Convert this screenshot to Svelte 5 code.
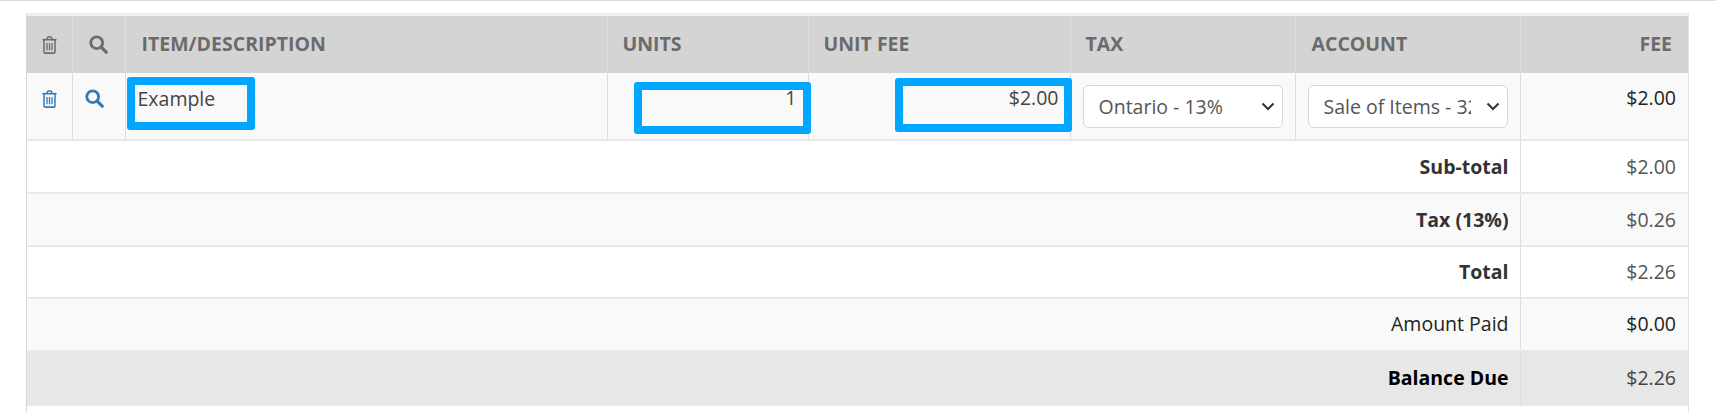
<script lang="ts">
	const summary = [
		{ label: 'Sub-total', value: '$2.00', kind: 'strong' },
		{ label: 'Tax (13%)', value: '$0.26', kind: 'strong alt' },
		{ label: 'Total', value: '$2.26', kind: 'strong short' },
		{ label: 'Amount Paid', value: '$0.00', kind: 'paid alt' },
		{ label: 'Balance Due', value: '$2.26', kind: 'due' },
	];
</script>

{#snippet trash()}
	<svg class="icon" width="15" height="18" viewBox="0 0 15 17" preserveAspectRatio="none" fill="none" stroke="currentColor" aria-hidden="true">
		<path d="M0.5 3.5h14" stroke-width="1.5" />
		<path d="M4.8 3.2 5.6 1.4a1 1 0 0 1 .8-.5h2.2a1 1 0 0 1 .8.5l.8 1.8" stroke-width="1.4" />
		<path d="M2 3.5v11.4c0 .8.5 1.3 1.2 1.3h8.6c.7 0 1.2-.5 1.2-1.3V3.5" stroke-width="1.5" />
		<path d="M5 6.5v7M7.5 6.5v7M10 6.5v7" stroke-width="1.3" />
	</svg>
{/snippet}

{#snippet search()}
	<svg class="icon" width="19" height="19" viewBox="0 0 19 19" fill="none" stroke="currentColor" aria-hidden="true">
		<circle cx="7.7" cy="7.7" r="5.9" stroke-width="2.8" />
		<path d="M12.2 12.2 17.2 17.2" stroke-width="3.2" stroke-linecap="round" />
	</svg>
{/snippet}

<div class="topline"></div>
<div class="page">
	<div class="frame">
		<table>
			<colgroup>
				<col style="width: 45px" />
				<col style="width: 53px" />
				<col style="width: 482px" />
				<col style="width: 201px" />
				<col style="width: 262px" />
				<col style="width: 225px" />
				<col style="width: 225px" />
				<col />
			</colgroup>
			<thead>
				<tr>
					<th class="tool">{@render trash()}</th>
					<th class="tool">{@render search()}</th>
					<th class="item-head">ITEM/DESCRIPTION</th>
					<th>UNITS</th>
					<th>UNIT FEE</th>
					<th>TAX</th>
					<th class="account">ACCOUNT</th>
					<th class="right">FEE</th>
				</tr>
			</thead>
			<tbody>
				<tr class="item">
					<td class="tool blue">{@render trash()}</td>
					<td class="tool blue shift">{@render search()}</td>
					<td class="desc">Example<span class="mark mark-desc"></span></td>
					<td class="num units">1<span class="mark mark-units"></span></td>
					<td class="num unitfee">$2.00<span class="mark mark-fee"></span></td>
					<td class="pick">
						<select>
							<option>Ontario - 13%</option>
						</select>
					</td>
					<td class="pick">
						<select>
							<option>Sale of Items - 3200</option>
						</select>
					</td>
					<td class="num fee">$2.00</td>
				</tr>
				{#each summary as row (row.label)}
					<tr class="sum {row.kind}">
						<td colspan="7" class="label">{row.label}</td>
						<td class="value">{row.value}</td>
					</tr>
				{/each}
			</tbody>
		</table>
	</div>
</div>

<style>
	:global(body) {
		margin: 0;
		background: #fff;
	}

	.topline {
		height: 1px;
		background: #dcdcdc;
	}

	.page {
		height: 411px;
		padding: 12px 27px 0 26px;
		box-sizing: border-box;
		overflow: hidden;
		font-family: 'Open Sans', sans-serif;
		font-size: 19.5px;
		color: #444;
	}

	.frame {
		height: 100%;
		border-left: 1px solid #d8d8d8;
		border-right: 1px solid #e2e2e2;
	}

	table {
		width: 100%;
		table-layout: fixed;
		border-collapse: collapse;
	}

	th {
		height: 53px;
		padding: 0 15px 2px;
		background: #d4d4d4;
		border-top: 3px solid #eeeeee;
		border-right: 1px solid #e0e0e0;
		color: #6b6b6b;
		font-size: 19.5px;
		font-weight: 700;
		text-align: left;
		vertical-align: middle;
	}

	th:last-child {
		border-right: none;
	}

	th.item-head,
	th.account {
		padding-left: 16px;
	}

	th.right {
		text-align: right;
		padding-right: 16px;
	}

	th.tool,
	td.tool {
		padding: 0;
		text-align: center;
	}

	th.tool {
		padding-bottom: 4px;
	}

	.icon {
		display: inline-block;
		vertical-align: middle;
	}

	td {
		padding: 0;
		border-bottom: 2px solid #e8e8e8;
		border-right: 1px solid #dddddd;
		box-sizing: border-box;
	}

	td:last-child {
		border-right: none;
	}

	.item td {
		position: relative;
		height: 67px;
		padding-top: 12px;
		background: #f9f9f9;
		vertical-align: top;
		line-height: 26px;
	}

	.item td.tool {
		padding-top: 11px;
	}

	.item td.tool.shift {
		padding-right: 8px;
	}

	.blue {
		color: #337ab7;
	}

	.item td.desc {
		padding-top: 13px;
		padding-left: 12px;
	}

	.num {
		text-align: right;
	}

	.item td.units {
		padding-right: 11px;
	}

	.item td.unitfee {
		padding-right: 11px;
	}

	.item td.fee {
		padding-right: 12px;
		color: #222;
	}

	.item td.pick {
		padding-top: 12px;
		padding-left: 12px;
		padding-right: 12px;
	}

	select {
		display: block;
		width: 100%;
		height: 43px;
		padding: 0 36px 0 15px;
		border: 1px solid #d5d5d5;
		border-radius: 6px;
		appearance: none;
		background: #fff url("data:image/svg+xml,%3Csvg xmlns='http://www.w3.org/2000/svg' width='14' height='9' viewBox='0 0 14 9'%3E%3Cpath d='M1.5 1.5 7 7l5.5-5.5' fill='none' stroke='%23333' stroke-width='2'/%3E%3C/svg%3E") no-repeat right 7px center;
		color: #555;
		font-family: inherit;
		font-size: 19.5px;
	}

	/* annotation boxes drawn over the editable cells */
	.mark {
		position: absolute;
		z-index: 1;
		box-sizing: border-box;
		border: 8px solid #00a6ff;
		border-radius: 3px;
	}

	.mark-desc {
		left: 1px;
		top: 4px;
		width: 128px;
		height: 53px;
	}

	.mark-units {
		left: 26px;
		top: 9px;
		width: 177px;
		height: 52px;
	}

	.mark-fee {
		left: 86px;
		top: 5px;
		width: 177px;
		height: 54px;
	}

	.sum td {
		height: 53px;
		line-height: 26px;
		vertical-align: middle;
		background: #fff;
	}

	.sum.short td {
		height: 52px;
	}

	.sum.alt td {
		background: #f9f9f9;
	}

	.sum.paid td {
		padding-bottom: 2px;
	}

	.sum.due td {
		height: 54px;
		background: #e7e7e7;
	}

	.label {
		padding-right: 11px;
		text-align: right;
	}

	.value {
		padding-right: 12px;
		text-align: right;
		color: #555;
	}

	.sum.strong .label {
		font-weight: 700;
		color: #333;
	}

	.sum.paid .label {
		color: #222;
	}

	.sum.paid .value {
		color: #222;
	}

	.sum.due .label {
		font-weight: 700;
		color: #000;
	}

	.sum.due .value {
		color: #444;
	}
</style>
